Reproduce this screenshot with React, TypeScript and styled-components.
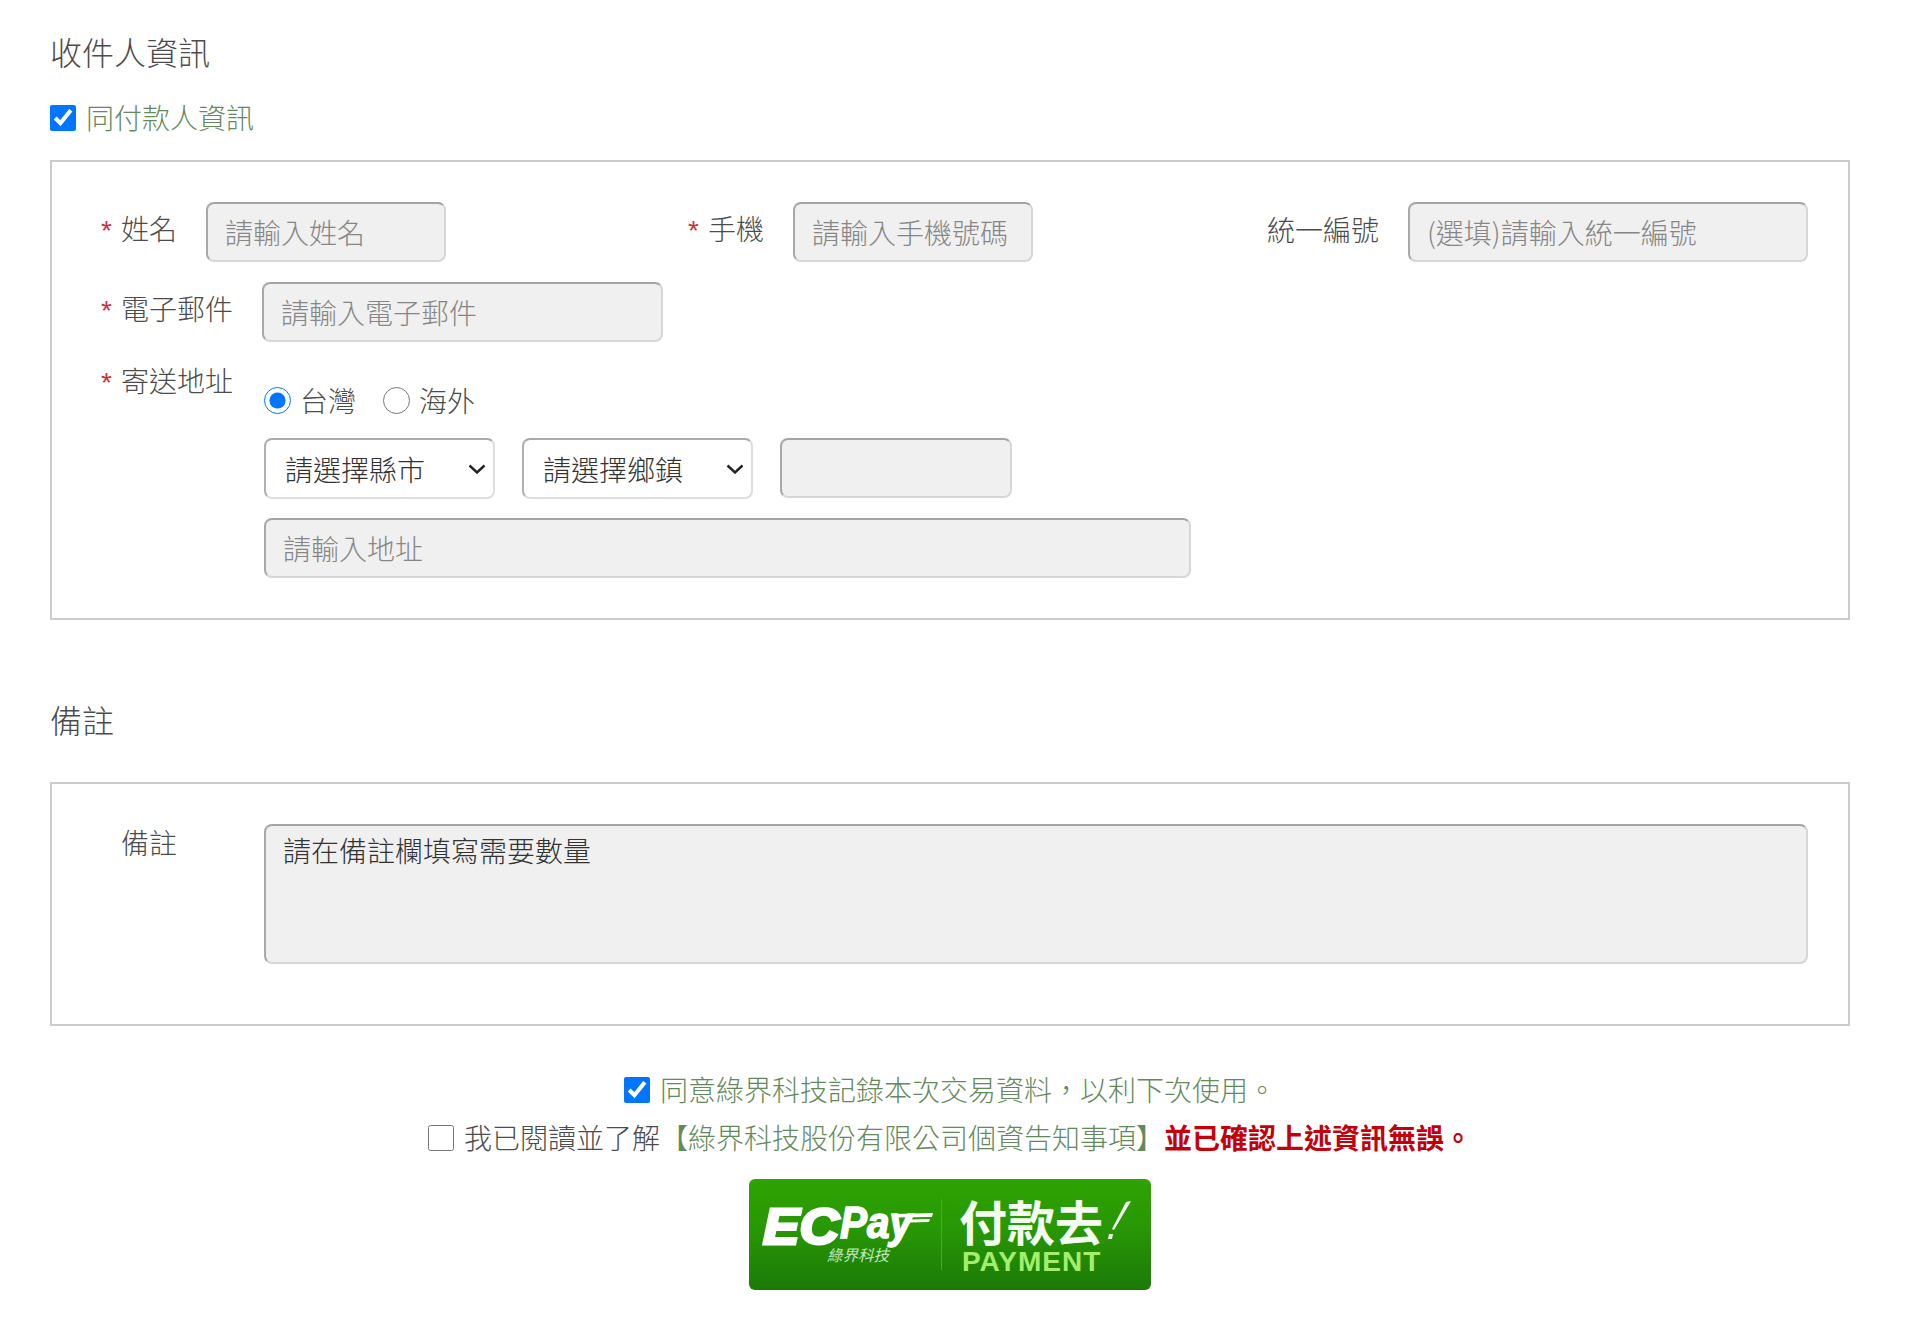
import styled, { createGlobalStyle } from 'styled-components'

const GlobalStyle = createGlobalStyle`
    html, body {
        margin: 0;
        padding: 0;
        background: #fff;
    }
    body {
        font-family: "Noto Sans CJK TC", "Liberation Sans", sans-serif;
        font-size: 28px;
        font-weight: 300;
        color: #4c4c4c;
    }
    * {
        box-sizing: border-box;
    }
`

const Page = styled.div`
    padding: 28px 66px 30px 50px;
`
const SectionTitle = styled.h2<{ $top?: number }>`
    margin: ${(p) => p.$top ?? 0}px 0 0;
    height: 46px;
    line-height: 46px;
    font-size: 32px;
    font-weight: 300;
    color: #4c4c4c;
`
const CheckLine = styled.label`
    display: flex;
    align-items: center;
    gap: 10px;
    margin-top: 30px;
    height: 26px;
    line-height: 24px;
    color: #648a5c;
`
const Box = styled.input`
    width: 26px;
    height: 26px;
    margin: 2px 0 0;
    flex: none;
`
const Panel = styled.div<{ $top: number; $bottom: number }>`
    margin-top: ${(p) => p.$top}px;
    border: 2px solid #ccc;
    padding: 40px 40px ${(p) => p.$bottom}px 49px;
`
const TopRow = styled.div`
    display: grid;
    grid-template-columns: 587px 579px 1fr;
`
const Field = styled.div<{ $top?: number }>`
    display: flex;
    align-items: center;
    gap: 29px;
    margin-top: ${(p) => p.$top ?? 0}px;
`
const FieldLabel = styled.div<{ $plain?: boolean }>`
    display: flex;
    align-items: baseline;
    flex: none;
    margin-bottom: 6px;
    line-height: 40px;
    white-space: nowrap;
    color: #4c4c4c;
    padding-left: ${(p) => (p.$plain ? 20 : 0)}px;
`
const Star = styled.span`
    width: 20px;
    color: #c8323c;
    font-size: 28px;
    font-family: "Liberation Sans", sans-serif;
`
const TextInput = styled.input<{ $width: string }>`
    width: ${(p) => p.$width};
    height: 60px;
    padding: 0 17px;
    background: #f0f0f0;
    border: 2px solid #d6d6d6;
    border-top-color: #a4a4a4;
    border-left-color: #a8a8a8;
    border-radius: 8px;
    font: inherit;
    color: #333;
    outline: none;
    &::placeholder {
        color: #868686;
        opacity: 1;
    }
`
const StackedRow = styled.div<{ $top: number }>`
    display: grid;
    grid-template-columns: 163px 1fr;
    margin-top: ${(p) => p.$top}px;
`
const TopLabel = styled(FieldLabel)`
    align-self: start;
    margin: -2px 0 0;
`
const AddressBody = styled.div`
    display: flex;
    flex-direction: column;
    padding-top: 18px;
`
const RadioLine = styled.div`
    display: flex;
    align-items: center;
    height: 40px;
`
const RadioLabel = styled.label`
    display: flex;
    align-items: center;
    gap: 9px;
    margin-right: 27px;
    color: #4c4c4c;
`
const Radio = styled.input`
    width: 27px;
    height: 27px;
    margin: 0;
`
const SelectRow = styled.div`
    display: flex;
    gap: 27px;
    margin: 18px 0 19px;
`
const SelectWrap = styled.div`
    position: relative;
    width: 231px;
    height: 61px;
`
const CitySelect = styled.select`
    appearance: none;
    width: 100%;
    height: 100%;
    padding: 0 0 0 19px;
    background: #fff;
    border: 2px solid #dedede;
    border-top-color: #aaa;
    border-left-color: #b0b0b0;
    border-radius: 8px;
    font: inherit;
    color: #333;
`
const Chevron = styled.svg`
    position: absolute;
    top: 26px;
    right: 9px;
    width: 18px;
    height: 10px;
    pointer-events: none;
`
const NoteArea = styled.textarea`
    display: block;
    width: 100%;
    height: 140px;
    padding: 4px 17px;
    background: #f0f0f0;
    border: 2px solid #d6d6d6;
    border-top-color: #a4a4a4;
    border-left-color: #a8a8a8;
    border-radius: 8px;
    font: inherit;
    line-height: 40px;
    color: #333;
    resize: none;
    outline: none;
`
const Agreements = styled.div`
    display: flex;
    flex-direction: column;
    align-items: center;
    margin-top: 47px;
`
const AgreeLine = styled.label<{ $top?: number }>`
    display: flex;
    align-items: center;
    gap: 10px;
    height: 32px;
    line-height: 32px;
    margin-top: ${(p) => p.$top ?? 0}px;
    color: #4c4c4c;
`
const Green = styled.span`
    color: #648a5c;
`
const Warn = styled.span`
    color: #c4000b;
    font-weight: 700;
`
const PayButton = styled.button`
    display: flex;
    align-items: stretch;
    width: 402px;
    height: 111px;
    margin-top: 26px;
    padding: 0;
    border: 0;
    border-radius: 6px;
    background: linear-gradient(180deg, #2ea302 0%, #289704 45%, #1b7a07 100%);
    font-family: "Noto Sans CJK TC", sans-serif;
    cursor: pointer;
`
const LogoMark = styled.svg`
    width: 186px;
    height: 111px;
    flex: none;
`
const Divider = styled.span`
    width: 1px;
    margin: 20px 17px 20px 6px;
    background: #45ad20;
`
const PayText = styled.span`
    display: flex;
    flex-direction: column;
    align-items: flex-start;
`
const PayTitle = styled.span`
    display: flex;
    align-items: center;
    height: 62px;
    margin-top: 10px;
    font-size: 48px;
    line-height: 62px;
    font-weight: 700;
    color: #f4fbf0;
    white-space: nowrap;
`
const PaySlash = styled.svg`
    width: 25px;
    height: 39px;
    margin-left: 3px;
`
const PaySub = styled.span`
    margin-left: 3px;
    font-family: "Liberation Sans", sans-serif;
    font-size: 28px;
    line-height: 22px;
    font-weight: 700;
    letter-spacing: 1px;
    color: #a4ee6e;
`

const SelectBox = ({ label }: { label: string }) => (
    <SelectWrap>
        <CitySelect>
            <option>{label}</option>
        </CitySelect>
        <Chevron viewBox="0 0 18 10">
            <path d="M1.5 1.5 L9 8.5 L16.5 1.5" fill="none" stroke="#222" strokeWidth="2.4" />
        </Chevron>
    </SelectWrap>
)

const EcpayLogo = () => (
    <LogoMark viewBox="0 0 186 111">
        <g fill="#fff" fontFamily='"Liberation Sans", sans-serif' fontWeight="700" fontStyle="italic">
            <text x="14" y="65" fontSize="50" textLength="76" lengthAdjust="spacingAndGlyphs" stroke="#fff" strokeWidth="3">
                EC
            </text>
            <text x="91" y="59" fontSize="44" textLength="72" lengthAdjust="spacingAndGlyphs" stroke="#fff" strokeWidth="1.5">
                Pay
            </text>
        </g>
        <path d="M146 35 L184 34 L183 38 L146 38.5 Z M162 40.5 L181 40 L180 43 L161 43.5 Z" fill="#fff" />
        <text
            x="78"
            y="82"
            fontSize="15.5"
            fontStyle="italic"
            fill="#c4e6bd"
            fontFamily='"Noto Sans CJK TC", sans-serif'
        >
            綠界科技
        </text>
    </LogoMark>
)

export default function App() {
    return (
        <>
            <GlobalStyle />
            <Page lang="zh-Hant">
                <SectionTitle>收件人資訊</SectionTitle>
                <CheckLine>
                    <Box type="checkbox" defaultChecked />
                    同付款人資訊
                </CheckLine>
                <Panel $top={30} $bottom={40}>
                    <TopRow>
                        <Field>
                            <FieldLabel>
                                <Star>*</Star>姓名
                            </FieldLabel>
                            <TextInput $width="240px" placeholder="請輸入姓名" />
                        </Field>
                        <Field>
                            <FieldLabel>
                                <Star>*</Star>手機
                            </FieldLabel>
                            <TextInput $width="240px" placeholder="請輸入手機號碼" />
                        </Field>
                        <Field>
                            <FieldLabel>統一編號</FieldLabel>
                            <TextInput $width="400px" placeholder="(選填)請輸入統一編號" />
                        </Field>
                    </TopRow>
                    <Field $top={20}>
                        <FieldLabel>
                            <Star>*</Star>電子郵件
                        </FieldLabel>
                        <TextInput $width="401px" placeholder="請輸入電子郵件" />
                    </Field>
                    <StackedRow $top={20}>
                        <TopLabel>
                            <Star>*</Star>寄送地址
                        </TopLabel>
                        <AddressBody>
                            <RadioLine>
                                <RadioLabel>
                                    <Radio type="radio" name="area" defaultChecked />
                                    台灣
                                </RadioLabel>
                                <RadioLabel>
                                    <Radio type="radio" name="area" />
                                    海外
                                </RadioLabel>
                            </RadioLine>
                            <SelectRow>
                                <SelectBox label="請選擇縣市" />
                                <SelectBox label="請選擇鄉鎮" />
                                <TextInput $width="232px" />
                            </SelectRow>
                            <TextInput $width="927px" placeholder="請輸入地址" />
                        </AddressBody>
                    </StackedRow>
                </Panel>
                <SectionTitle $top={76}>備註</SectionTitle>
                <Panel $top={40} $bottom={60}>
                    <StackedRow $top={0}>
                        <TopLabel $plain>備註</TopLabel>
                        <NoteArea defaultValue="請在備註欄填寫需要數量" />
                    </StackedRow>
                </Panel>
                <Agreements>
                    <AgreeLine>
                        <Box type="checkbox" defaultChecked />
                        <Green>同意綠界科技記錄本次交易資料，以利下次使用。</Green>
                    </AgreeLine>
                    <AgreeLine $top={16}>
                        <Box type="checkbox" />
                        <span>
                            我已閱讀並了解<Green>【綠界科技股份有限公司個資告知事項】</Green>
                            <Warn>並已確認上述資訊無誤。</Warn>
                        </span>
                    </AgreeLine>
                    <PayButton type="button">
                        <EcpayLogo />
                        <Divider />
                        <PayText>
                            <PayTitle>
                                付款去
                                <PaySlash viewBox="0 0 25 39">
                                    <path d="M25 0 L20 1 L6 28 L8 29 Z M3 33 L7 33 L6 38 L2 38 Z" fill="#f4fbf0" />
                                </PaySlash>
                            </PayTitle>
                            <PaySub>PAYMENT</PaySub>
                        </PayText>
                    </PayButton>
                </Agreements>
            </Page>
        </>
    )
}
